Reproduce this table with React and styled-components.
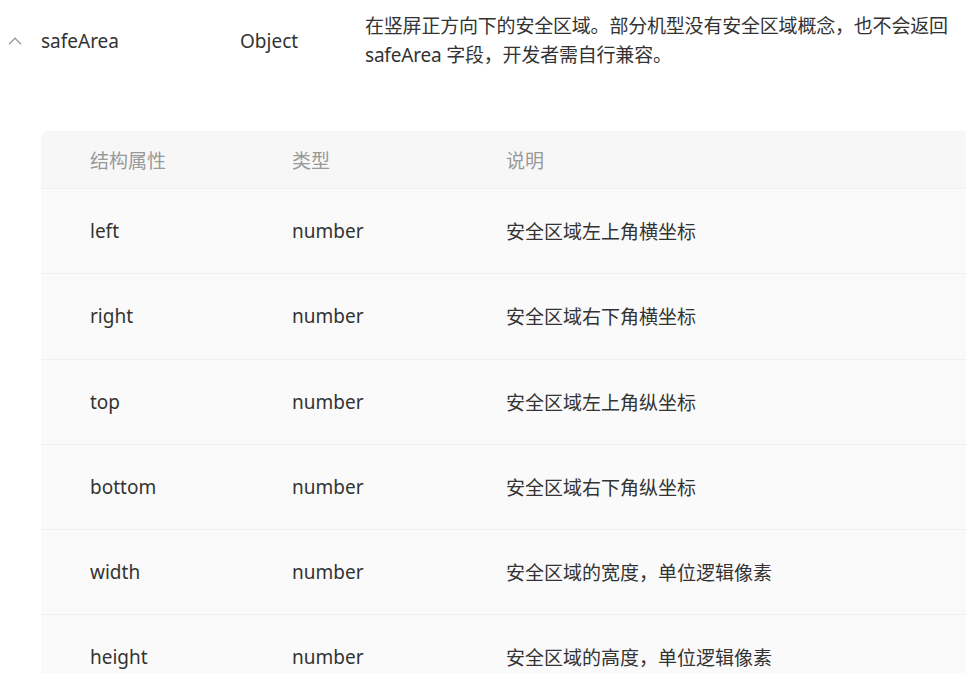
import styled, { createGlobalStyle } from "styled-components";

const GlobalStyle = createGlobalStyle`
  html, body {
    margin: 0;
    padding: 0;
    background: #fff;
    overflow: hidden;
  }
  body {
    font-family: "Noto Sans", "Noto Sans CJK SC", sans-serif;
    color: #333;
  }
  * {
    box-sizing: border-box;
  }
`;

const fields = [
  { name: "left", type: "number", desc: "安全区域左上角横坐标" },
  { name: "right", type: "number", desc: "安全区域右下角横坐标" },
  { name: "top", type: "number", desc: "安全区域左上角纵坐标" },
  { name: "bottom", type: "number", desc: "安全区域右下角纵坐标" },
  { name: "width", type: "number", desc: "安全区域的宽度，单位逻辑像素" },
  { name: "height", type: "number", desc: "安全区域的高度，单位逻辑像素" },
];

const Page = styled.div`
  width: 1010px;
`;

const PropRow = styled.div`
  display: grid;
  grid-template-columns: 41px 199px 125px 592px;
  align-items: center;
  padding-top: 12px;
  font-size: 19px;
`;

const Toggle = styled.div`
  display: flex;
  align-items: center;
  padding-left: 8px;
  height: 29px;
  color: #9a9a9a;
`;

const Cell = styled.div`
  line-height: 29px;
  color: #333;
`;

const Desc = styled(Cell)`
  letter-spacing: -0.2px;
`;

const Table = styled.div`
  margin: 61px 0 0 41px;
  background: #fafafa;
  border-radius: 8px 0 0 0;
  overflow: hidden;
`;

const Row = styled.div`
  display: grid;
  grid-template-columns: 202px 214px 1fr;
  align-items: center;
  padding-left: 49px;
  height: ${(p) => (p.$head ? "58px" : "85.25px")};
  background: ${(p) => (p.$head ? "#f7f7f7" : "#fafafa")};
  border-bottom: 1px solid #efefef;
  font-size: 19px;
  color: ${(p) => (p.$head ? "#999" : "#333")};
`;

const Chevron = () => (
  <svg width="14" height="8" viewBox="0 0 14 8" fill="none">
    <path d="M1 7.2 L7 1.2 L13 7.2" stroke="currentColor" strokeWidth="1.3" />
  </svg>
);

export default function App() {
  return (
    <Page>
      <GlobalStyle />
      <PropRow>
        <Toggle>
          <Chevron />
        </Toggle>
        <Cell>safeArea</Cell>
        <Cell>Object</Cell>
        <Desc>
          在竖屏正方向下的安全区域。部分机型没有安全区域概念，也不会返回 safeArea
          字段，开发者需自行兼容。
        </Desc>
      </PropRow>
      <Table>
        <Row $head>
          <span>结构属性</span>
          <span>类型</span>
          <span>说明</span>
        </Row>
        {fields.map((f) => (
          <Row key={f.name}>
            <span>{f.name}</span>
            <span>{f.type}</span>
            <span>{f.desc}</span>
          </Row>
        ))}
      </Table>
    </Page>
  );
}
